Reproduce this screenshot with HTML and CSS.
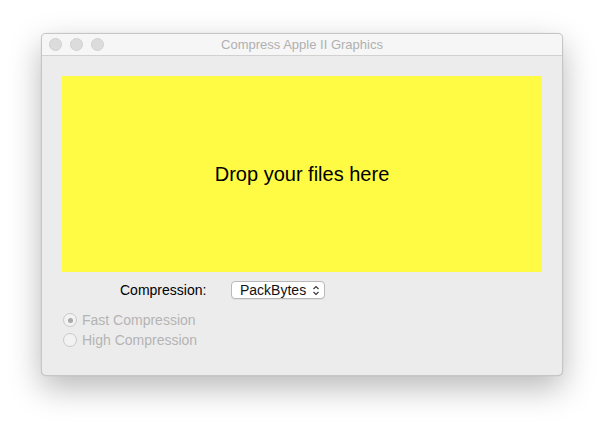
FILE: index.html
```html
<!DOCTYPE html>
<html>
<head>
<meta charset="utf-8">
<link rel="stylesheet" href="styles.css">
</head>
<body>
<div class="window">
  <div class="titlebar">
    <div class="lights">
      <span class="light"></span><span class="light"></span><span class="light"></span>
    </div>
    <div class="title">Compress Apple II Graphics</div>
    <div></div>
  </div>
  <div class="content">
    <div class="drop">Drop your files here</div>
    <div class="row">
      <span class="label">Compression:</span>
      <div class="popup">
        <span>PackBytes</span>
        <svg class="arrows" width="8" height="11" viewBox="0 0 8 11"><path d="M1.5 4 L4 1.5 L6.5 4 M1.5 7 L4 9.5 L6.5 7" fill="none" stroke="#333" stroke-width="1.1"/></svg>
      </div>
    </div>
    <div class="radios">
      <div class="radio"><span class="circle on"></span><span>Fast Compression</span></div>
      <div class="radio"><span class="circle"></span><span>High Compression</span></div>
    </div>
  </div>
</div>
</body>
</html>
```
FILE: styles.css
```css
html, body {
  margin: 0;
  background: #ffffff;
}
body {
  box-sizing: border-box;
  min-height: 425px;
  padding: 33px 0 0 41px;
  font-family: "Liberation Sans", Arial, sans-serif;
}
.window {
  box-sizing: border-box;
  width: 522px;
  height: 343px;
  background: #ececec;
  border: 1px solid #c6c6c6;
  border-radius: 5px;
  box-shadow: 0 12px 32px rgba(0,0,0,0.28), 0 0 1px rgba(0,0,0,0.2);
  overflow: hidden;
}
.titlebar {
  height: 21px;
  background: #f6f6f6;
  border-bottom: 1px solid #d1d1d1;
  display: grid;
  grid-template-columns: 1fr auto 1fr;
  align-items: center;
}
.lights {
  display: flex;
  gap: 8px;
  padding-left: 7px;
}
.light {
  width: 11px;
  height: 11px;
  border-radius: 50%;
  background: #dcdcdc;
  border: 0.5px solid #d0d0d0;
}
.title {
  font-size: 13px;
  color: #b0b0b0;
}
.content {
  padding: 20px 19px 0 20px;
}
.drop {
  width: 480px;
  height: 196px;
  background: #fffb45;
  display: flex;
  align-items: center;
  justify-content: center;
  font-size: 20px;
  color: #000;
  padding-top: 1px;
  box-sizing: border-box;
}
.row {
  display: flex;
  align-items: center;
  margin-top: 9px;
  padding-left: 58px;
  gap: 23px;
  font-size: 14px;
}
.label {
  width: 88px;
  color: #000;
}
.popup {
  box-sizing: border-box;
  width: 94px;
  height: 18px;
  background: #fff;
  border: 1px solid #b9b9b9;
  border-radius: 4px;
  display: flex;
  align-items: center;
  justify-content: space-between;
  padding: 0 4px 0 8px;
  color: #111;
  box-shadow: 0 1px 0 rgba(0,0,0,0.06);
}
.arrows {
  display: block;
}
.radios {
  margin-top: 11px;
  padding-left: 1px;
}
.radio {
  display: flex;
  align-items: center;
  height: 20px;
  gap: 5px;
  font-size: 14px;
  color: #b4b4b4;
}
.circle {
  box-sizing: border-box;
  width: 14px;
  height: 14px;
  border-radius: 50%;
  border: 1px solid #cacaca;
  background: #f2f2f2;
  display: flex;
  align-items: center;
  justify-content: center;
}
.circle.on::after {
  content: "";
  width: 5px;
  height: 5px;
  border-radius: 50%;
  background: #a8a8a8;
}
```
